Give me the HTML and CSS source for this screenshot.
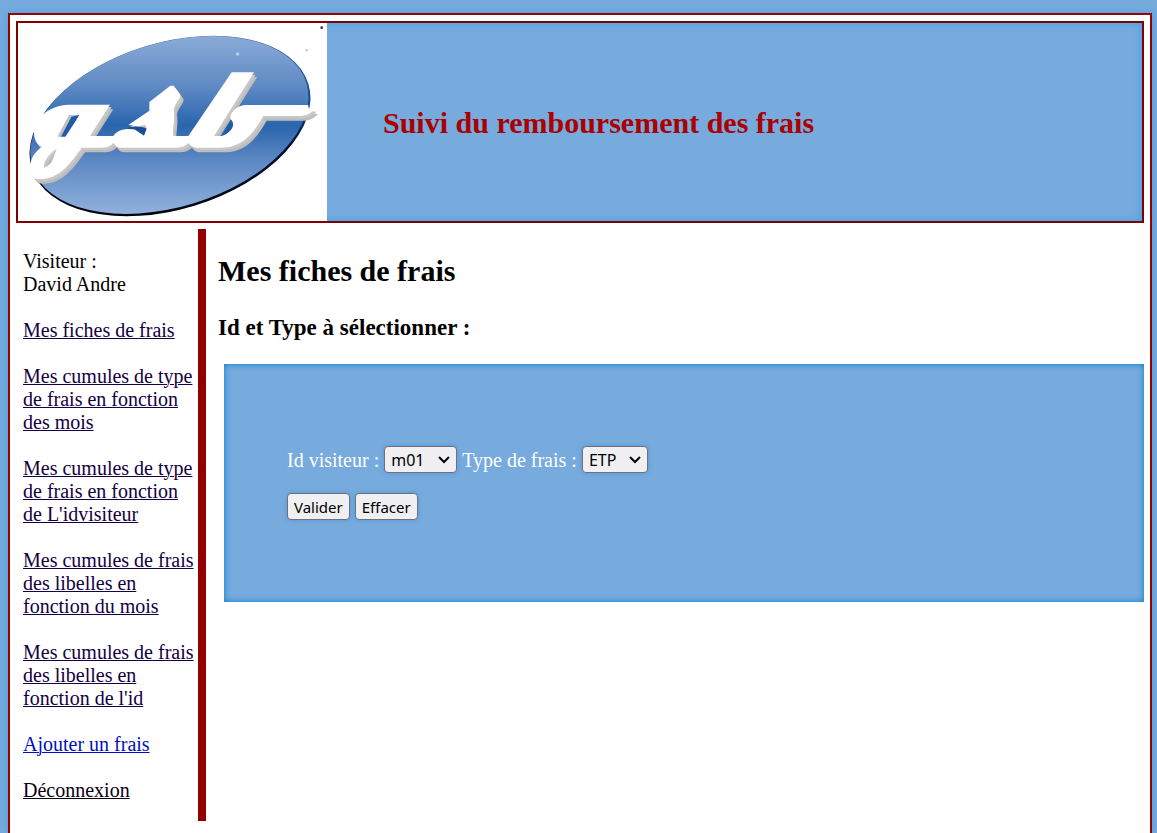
FILE: index.html
```html
<!DOCTYPE html>
<html lang="fr">
<head>
<meta charset="utf-8">
<title>Suivi du remboursement des frais</title>
<link rel="stylesheet" href="styles.css">
</head>
<body>
<div class="page">
  <header class="banner">
    <svg class="logo" viewBox="54 69 927 594" role="img" aria-label="Logo du laboratoire">
      <defs>
        <linearGradient id="oval" x1="0" y1="107" x2="0" y2="647" gradientUnits="userSpaceOnUse">
          <stop offset="0" stop-color="#8aabd8"/>
          <stop offset=".28" stop-color="#5f8ac4"/>
          <stop offset=".5" stop-color="#2a65ad"/>
          <stop offset=".68" stop-color="#5a86c2"/>
          <stop offset="1" stop-color="#93b2dd"/>
        </linearGradient>
        <linearGradient id="rim" x1="0" y1="107" x2="0" y2="647" gradientUnits="userSpaceOnUse">
          <stop offset="0" stop-color="#4a6c9c"/>
          <stop offset=".4" stop-color="#0d458c"/>
          <stop offset=".6" stop-color="#00122e"/>
          <stop offset="1" stop-color="#00040c"/>
        </linearGradient>
        <clipPath id="edge"><ellipse cx="510" cy="378" rx="434" ry="250" transform="rotate(-17 510 378)"/></clipPath>
        <clipPath id="face"><ellipse cx="508" cy="375" rx="430" ry="246" transform="rotate(-17 508 375)"/></clipPath>
        <path id="script" fill-rule="evenodd" d="M330 314H205C150 316 106 352 102 392C101 415 108 434 127 440C103 456 90 478 90 502C90 518 96 530 106 536C170 544 205 500 245 443H300C318 443 330 440 341 428C346 438 352 443 364 443H530C546 443 556 438 566 429C572 438 580 443 590 443H665C724 441 756 408 790 348H905C925 346 937 336 944 328L925 325V315H735C708 318 686 342 692 358C709 371 696 397 666 408H642L762 217H695L565 408H520C516 386 526 366 521 328C525 310 541 298 541 284L521 257H511L448 306V332L385 375L414 379L436 374L440 386L432 407L405 389C382 383 350 389 340 408H270ZM207 345H239L196 410H172ZM170 446C161 478 148 500 133 503C128 487 143 465 170 446Z"/>
      </defs>
      <rect x="54" y="69" width="927" height="594" fill="#fff"/>
      <rect x="54" y="69" width="927" height="594" clip-path="url(#edge)" fill="url(#rim)"/>
      <rect x="54" y="69" width="927" height="594" clip-path="url(#face)" fill="url(#oval)"/>
      <use href="#script" x="10" y="14" fill="#bdbdbd"/>
      <use href="#script" x="5" y="7" fill="#c9c8c6"/>
      <path d="M180 412L213 350L238 345L196 412ZM668 404L691 365L702 378L690 400Z" fill="#205ca6"/>
      <path d="M378 386C400 376 424 378 441 386L433 406L405 389Z" fill="#194f95"/>
      <path d="M172 412L207 345H217L182 412Z" fill="#bfc0c3"/>
      <use href="#script" fill="#fff"/>
      <circle cx="713" cy="162" r="5" fill="#b9d3ef"/>
      <circle cx="965" cy="83" r="4" fill="#333"/>
      <circle cx="920" cy="151" r="3" fill="#aaa"/>
    </svg>
    <h1 class="banner-title">Suivi du remboursement des frais</h1>
  </header>
  <div class="columns">
    <nav class="menu">
      <p class="visitor">Visiteur :<br>David Andre</p>
      <ul class="links">
        <li><a href="#fiches">Mes fiches de frais</a></li>
        <li><a href="#type-mois">Mes cumules de type de frais en fonction des mois</a></li>
        <li><a href="#type-visiteur">Mes cumules de type de frais en fonction de L'idvisiteur</a></li>
        <li><a href="#libelles-mois">Mes cumules de frais des libelles en fonction du mois</a></li>
        <li><a href="#libelles-id">Mes cumules de frais des libelles en fonction de l'id</a></li>
        <li><a class="add" href="#ajouter">Ajouter un frais</a></li>
        <li><a class="logout" href="#deconnexion">Déconnexion</a></li>
      </ul>
    </nav>
    <main class="content">
      <h2 class="title">Mes fiches de frais</h2>
      <h3 class="subtitle">Id et Type à sélectionner :</h3>
      <form class="panel">
        <div class="row">
          <label for="visiteur">Id visiteur :</label>
          <span class="picker">
            <select class="control select wide" id="visiteur"><option>m01</option></select>
            <svg class="arrow" viewBox="0 0 12 8"><path d="M1 1l5 5 5-5"/></svg>
          </span>
          <label for="type">Type de frais :</label>
          <span class="picker">
            <select class="control select" id="type"><option>ETP</option></select>
            <svg class="arrow" viewBox="0 0 12 8"><path d="M1 1l5 5 5-5"/></svg>
          </span>
        </div>
        <div class="row">
          <button class="control button" type="submit">Valider</button>
          <button class="control button" type="reset">Effacer</button>
        </div>
      </form>
    </main>
  </div>
</div>
</body>
</html>
```
FILE: styles.css
```css
* {
  box-sizing: border-box;
}

body {
  display: flex;
  flex-direction: column;
  min-height: 100vh;
  margin: 0;
  padding: 13px 5px 0 8px;
  background: #77aadd;
  color: #000;
  font-family: "Liberation Serif", "Times New Roman", serif;
  font-size: 20px;
  line-height: 23px;
}

.page {
  flex: 1;
  padding: 6px 6px 12px;
  border: 2px solid #990000;
  border-bottom: 0;
  background: #fff;
  box-shadow: 0 0 8px #45a0e6;
}

.banner {
  display: flex;
  align-items: center;
  border: 2px solid #800000;
  background: #77aadd;
  box-shadow: inset 0 0 8px #38a0ec;
}

.logo {
  display: block;
  flex: none;
  width: 309px;
  height: 198px;
}

.banner-title {
  margin: 0;
  padding: 2px 0 0 56px;
  color: #aa0000;
  font-size: 30px;
  line-height: 34px;
}

.columns {
  display: flex;
  margin-top: 6px;
}

.menu {
  flex: none;
  width: 190px;
  padding: 21px 0 19px 7px;
  border-right: 8px solid #930000;
}

.visitor {
  margin: 0 0 23px;
}

.links {
  display: flex;
  flex-direction: column;
  gap: 23px;
  margin: 0;
  padding: 0;
  list-style: none;
}

.links a {
  color: #140044;
  text-decoration-thickness: 1px;
  text-underline-offset: 1px;
}

.links .add {
  color: #0011bb;
}

.links .logout {
  color: #080010;
}

.content {
  flex: 1;
  padding: 25px 0 0 12px;
}

.title {
  margin: 0;
  font-size: 30px;
  line-height: 34px;
}

.subtitle {
  margin: 26px 0 23px;
  font-size: 23px;
  line-height: 27px;
}

.panel {
  display: flex;
  flex-direction: column;
  gap: 20px;
  margin-left: 6px;
  padding: 82px 63px;
  background: #77aadd;
  box-shadow: inset 0 0 6px #0080d0;
}

.row {
  display: flex;
  align-items: center;
  gap: 5px;
  color: #fff;
}

.row label {
  padding-top: 2px;
}

.picker {
  position: relative;
  display: block;
}

.control {
  height: 27px;
  padding: 0 6px;
  border: 1px solid #7a6c72;
  border-radius: 4px;
  background: #f0f0f3;
  box-shadow: 0 0 4px #459ce0;
  color: #000;
  font-family: "Noto Sans", sans-serif;
  font-size: 16px;
  line-height: 24px;
}

.select {
  display: block;
  width: 66px;
  appearance: none;
}

.wide {
  width: 73px;
}

.button {
  font-size: 15px;
}

.arrow {
  position: absolute;
  top: 10px;
  right: 7px;
  width: 12px;
  height: 8px;
  fill: none;
  stroke: #000;
  stroke-width: 2;
  pointer-events: none;
}
```
